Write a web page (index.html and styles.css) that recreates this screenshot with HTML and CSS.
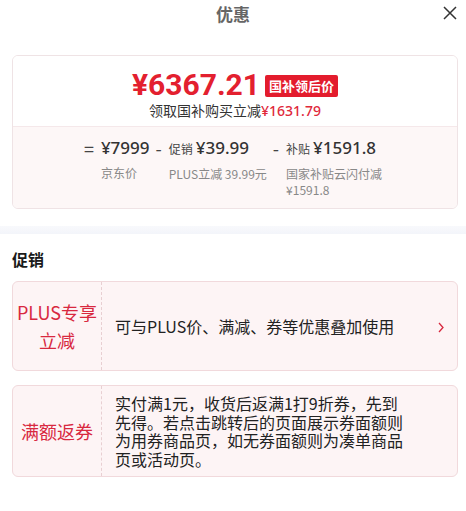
FILE: index.html
```html
<!DOCTYPE html>
<html lang="zh">
<head>
<meta charset="utf-8">
<title>优惠</title>
<link rel="stylesheet" href="styles.css">
</head>
<body>
<div class="sheet">
  <header class="header">
    <span></span>
    <h1 class="title">优惠</h1>
    <button class="close" aria-label="关闭">
      <svg width="14" height="14" viewBox="0 0 14 14"><path d="M1 1L13 13M13 1L1 13" stroke="#333" stroke-width="1.5" fill="none"/></svg>
    </button>
  </header>

  <section class="wrap">
    <div class="price-card">
      <div class="price-top">
        <div class="price-row">
          <span class="price">¥6367.21</span>
          <span class="badge">国补领后价</span>
        </div>
        <div class="save">领取国补购买立减<span class="save-amt">¥1631.79</span></div>
      </div>
      <div class="price-calc">
        <div class="calc-item">
          <span class="sign">=</span>
          <div class="calc-body">
            <div class="calc-val">¥7999</div>
            <div class="calc-label">京东价</div>
          </div>
        </div>
        <div class="calc-item">
          <span class="sign">-</span>
          <div class="calc-body">
            <div class="calc-val"><span class="calc-tag">促销</span>¥39.99</div>
            <div class="calc-label">PLUS立减 39.99元</div>
          </div>
        </div>
        <div class="calc-item">
          <span class="sign">-</span>
          <div class="calc-body narrow">
            <div class="calc-val"><span class="calc-tag">补贴</span>¥1591.8</div>
            <div class="calc-label">国家补贴云闪付减¥1591.8</div>
          </div>
        </div>
      </div>
    </div>
  </section>

  <div class="band"></div>

  <section class="wrap promos">
    <h2 class="sec-title">促销</h2>
    <div class="promo">
      <div class="promo-tag">PLUS专享<br>立减</div>
      <div class="promo-body">
        <div class="promo-text">可与PLUS价、满减、券等优惠叠加使用</div>
        <svg class="arrow" width="6" height="11" viewBox="0 0 6 11"><path d="M1 1L5 5.5L1 10" stroke="#d8283f" stroke-width="1.3" fill="none"/></svg>
      </div>
    </div>
    <div class="promo">
      <div class="promo-tag">满额返券</div>
      <div class="promo-body">
        <div class="promo-text long">实付满1元，收货后返满1打9折券，先到先得。若点击跳转后的页面展示券面额则为用券商品页，如无券面额则为凑单商品页或活动页。</div>
      </div>
    </div>
  </section>
</div>
</body>
</html>
```

FILE: styles.css
```css
* { box-sizing: border-box; }
html, body { margin: 0; padding: 0; background: #fff; }
body {
  font-family: "Noto Sans CJK SC", "Noto Sans", sans-serif;
  color: #222;
  width: 466px;
}
.header {
  display: grid;
  grid-template-columns: 1fr auto 1fr;
  align-items: center;
  height: 28px;
}
.title {
  margin: 0;
  font-size: 17px;
  font-weight: 700;
  color: #666;
  line-height: 28px;
}
.close {
  justify-self: end;
  margin-right: 9px;
  border: 0;
  background: none;
  padding: 0;
  width: 14px;
  height: 14px;
  display: flex;
  margin-top: -2px;
}
.wrap { padding: 0 8px 0 12px; }
.price-card {
  margin-top: 27px;
  border: 1px solid #efe3e5;
  border-radius: 6px;
  overflow: hidden;
}
.price-top {
  background: #fff;
  padding: 12px 0 6px;
  display: flex;
  flex-direction: column;
  align-items: center;
  border-bottom: 1px solid #f5e8ea;
}
.price-row {
  display: flex;
  align-items: center;
  gap: 5px;
  height: 33px;
}
.price {
  font-family: Roboto, "Noto Sans", sans-serif;
  font-weight: 700;
  font-size: 30px;
  color: #e3202f;
  line-height: 33px;
}
.badge {
  background: #e31c2d;
  color: #fff;
  font-size: 13px;
  font-weight: 700;
  line-height: 22px;
  height: 22px;
  padding: 0 4px;
  border-radius: 2px;
  margin-top: 2px;
}
.save {
  font-size: 14px;
  line-height: 19px;
  color: #333;
}
.save-amt {
  color: #e0283a;
  font-family: "Noto Sans", sans-serif;
  font-weight: 500;
}
.price-calc {
  background: #fdf7f7;
  display: flex;
  justify-content: center;
  gap: 6px;
  padding: 9px 0 10px;
}
.calc-item {
  display: flex;
  gap: 7px;
}
.sign {
  font-size: 18px;
  line-height: 24px;
  color: #444;
}
.calc-val {
  font-family: "Noto Sans", sans-serif;
  font-size: 17px;
  line-height: 24px;
  color: #333;
  font-weight: 500;
  white-space: nowrap;
}
.calc-tag {
  font-family: "Noto Sans CJK SC", sans-serif;
  font-size: 12px;
  color: #444;
  margin-right: 3px;
  font-weight: 400;
}
.calc-label {
  margin-top: 5px;
  font-size: 12px;
  line-height: 16px;
  color: #888;
}
.narrow { width: 100px; }
.band {
  margin-top: 17px;
  height: 8px;
  background: linear-gradient(#f8f9fc, #f3f5fa);
}
.sec-title {
  margin: 13px 0 10px;
  font-size: 16px;
  line-height: 24px;
  font-weight: 700;
  color: #1a1a1a;
}
.promo {
  display: flex;
  border: 1px solid #f1d9dc;
  border-radius: 6px;
  background: #fdf4f5;
  margin-bottom: 14px;
}
.promo-tag {
  width: 89px;
  flex: none;
  border-right: 1px dashed #e8cfd2;
  display: flex;
  align-items: center;
  justify-content: center;
  text-align: center;
  font-size: 18px;
  line-height: 28px;
  color: #d8283f;
  padding: 16px 0;
}
.promo-body {
  flex: 1;
  display: flex;
  align-items: center;
  padding: 8px 13px 8px 13px;
}
.promo-text {
  font-size: 16px;
  line-height: 18.5px;
  color: #222;
}
.promo-text.long { width: 292px; }
.arrow { margin-left: auto; margin-top: 3px; }
```
